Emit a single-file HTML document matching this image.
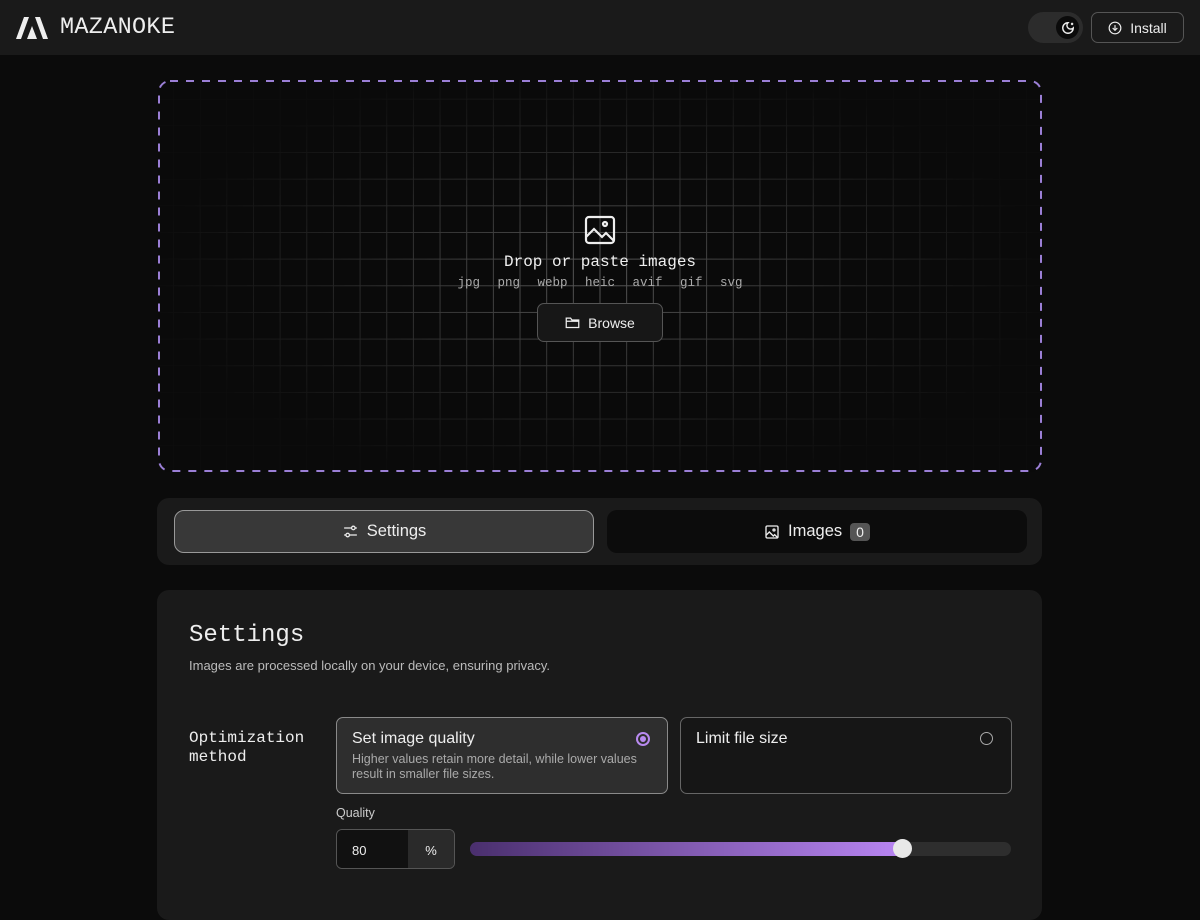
<!DOCTYPE html>
<html><head><meta charset="utf-8"><style>
*{box-sizing:border-box;margin:0;padding:0}
body{width:1200px;height:899px;overflow:hidden;background:#0b0b0b;font-family:"Liberation Sans",sans-serif;color:#eee;position:relative}
.mono{font-family:"Liberation Mono",monospace}
header{position:absolute;left:0;top:0;width:1200px;height:55px;background:#1a1a1a}
.logo{position:absolute;left:16px;top:14px;display:flex;align-items:center;gap:12px}
.logo span{font-size:23.5px;color:#eee;letter-spacing:0.3px}
.toggle{position:absolute;left:1028px;top:12px;width:55px;height:31px;border-radius:16px;background:#2c2c2c}
.toggle .k{position:absolute;right:4px;top:4px;width:23px;height:23px;border-radius:50%;background:#0b0b0b;display:flex;align-items:center;justify-content:center}
.install{position:absolute;left:1091px;top:12px;width:93px;height:31px;border:1px solid #555;border-radius:7px;display:flex;align-items:center;justify-content:center;gap:8px;font-size:14px;color:#eee}
.drop{position:absolute;left:158px;top:80px;width:884px;height:392px;border-radius:12px;overflow:hidden;background:#0a0a0a}
.grid{position:absolute;inset:0;background-image:linear-gradient(to right,#5a5a5a 1px,transparent 1px),linear-gradient(to bottom,#5a5a5a 1px,transparent 1px);background-size:26.67px 26.67px;background-position:15px 18.7px;-webkit-mask-image:radial-gradient(ellipse 50% 55% at 50% 50%,rgba(0,0,0,1),rgba(0,0,0,.35) 60%,rgba(0,0,0,.04) 100%);mask-image:radial-gradient(ellipse 50% 55% at 50% 50%,rgba(0,0,0,1),rgba(0,0,0,.35) 60%,rgba(0,0,0,.04) 100%)}
.dash{position:absolute;left:158px;top:80px;width:884px;height:392px}
.center{position:absolute;left:158px;top:80px;width:884px;text-align:center}
.browse{position:absolute;left:537px;top:303px;width:126px;height:39px;border:1px solid #555;border-radius:7px;background:#171717;display:flex;align-items:center;justify-content:center;gap:8px;font-size:14px}
.tabs{position:absolute;left:157px;top:498px;width:885px;height:67px;background:#1a1a1a;border-radius:12px}
.tab{position:absolute;top:12px;height:43px;width:420px;border-radius:10px;display:flex;align-items:center;justify-content:center;gap:8px;font-size:16.5px}
.panel{position:absolute;left:157px;top:590px;width:885px;height:330px;background:#1a1a1a;border-radius:12px}
.opt{position:absolute;top:127px;height:77px;width:332px;border-radius:7px;padding:12px 15px}
</style></head><body>
<header>
<div class="logo">
<svg width="32" height="22" viewBox="0 0 32 22"><path d="M0 22 L8 0 H13 L5 22Z M19 0 H24 L32 22 H27Z M11 22 L16 9 L21 22 Z" fill="#eee"/></svg>
<span class="mono">MAZANOKE</span></div>
<div class="toggle"><div class="k"><svg width="14" height="14" viewBox="0 0 24 24" fill="none" stroke="#eee" stroke-width="2.4"><path d="M12 3a6 6 0 0 0 9 9 9 9 0 1 1-9-9z"/><path d="M19 3v4M17 5h4"/></svg></div></div>
<div class="install"><svg width="14" height="14" viewBox="0 0 24 24" fill="none" stroke="#eee" stroke-width="2"><circle cx="12" cy="12" r="10"/><path d="M12 7v9M8 12l4 4 4-4"/></svg>Install</div>
</header>
<div class="drop"><div class="grid"></div></div>
<svg class="dash" viewBox="0 0 884 392"><rect x="1" y="1" width="882" height="390" rx="11" fill="none" stroke="#9b7fd6" stroke-width="2" stroke-dasharray="8 8"/></svg>
<div class="center">
<svg style="position:absolute;left:426px;top:135px" width="32" height="30" viewBox="0 0 32 30" fill="none" stroke="#eee" stroke-width="2.2"><rect x="2" y="2" width="28" height="26" rx="3"/><circle cx="21" cy="9" r="2"/><path d="M2 22 L10 14 L18 22 L22 18 L30 26"/></svg>
<div class="mono" style="position:absolute;left:0;width:884px;top:173px;font-size:16px;color:#eee">Drop or paste images</div>
<div class="mono" style="position:absolute;left:0;width:884px;top:196px;font-size:12.5px;color:#aaa;word-spacing:10px">jpg png webp heic avif gif svg</div>
</div>
<div class="browse"><svg width="15" height="13" viewBox="0 0 24 20" fill="none" stroke="#eee" stroke-width="2"><path d="M2 3h7l2 3h11v12H2z M2 8h20"/></svg>Browse</div>
<div class="tabs">
<div class="tab" style="left:17px;background:#383838;border:1.5px solid #999"><svg width="17" height="17" viewBox="0 0 24 24" fill="none" stroke="#eee" stroke-width="1.8"><path d="M3 7h10M19 7h2M3 17h2M11 17h10"/><circle cx="16" cy="7" r="2.5"/><circle cx="8" cy="17" r="2.5"/></svg>Settings</div>
<div class="tab" style="left:450px;background:#0c0c0c"><svg width="16" height="16" viewBox="0 0 24 24" fill="none" stroke="#eee" stroke-width="2"><rect x="3" y="3" width="18" height="18" rx="2"/><circle cx="15" cy="9" r="1.5"/><path d="M3 17l5-5 6 6 2-2 5 5"/></svg>Images <span style="background:#555;border-radius:4px;padding:1px 6px;font-size:14px">0</span></div>
</div>
<div class="panel">
<div class="mono" style="position:absolute;left:32px;top:32px;font-size:24px;color:#eee">Settings</div>
<div style="position:absolute;left:32px;top:68px;font-size:13px;color:#bbb">Images are processed locally on your device, ensuring privacy.</div>
<div class="mono" style="position:absolute;left:32px;top:139px;font-size:16px;line-height:19px;color:#eee">Optimization<br>method</div>
<div class="opt" style="left:179px;background:#2e2e2e;border:1.5px solid #8a8a8a">
<div style="font-size:16px;color:#eee">Set image quality</div>
<div style="font-size:12.5px;color:#aaa;margin-top:4px;line-height:15px">Higher values retain more detail, while lower values result in smaller file sizes.</div>
<div style="position:absolute;right:17px;top:14px;width:14px;height:14px;border-radius:50%;border:2px solid #b88af0;display:flex;align-items:center;justify-content:center"><div style="width:6px;height:6px;border-radius:50%;background:#b88af0"></div></div>
</div>
<div class="opt" style="left:523px;background:#161616;border:1px solid #666">
<div style="font-size:16px;color:#eee">Limit file size</div>
<div style="position:absolute;right:18px;top:14px;width:13px;height:13px;border-radius:50%;border:1.5px solid #aaa"></div>
</div>
<div style="position:absolute;left:179px;top:216px;font-size:12.5px;color:#ccc">Quality</div>
<div style="position:absolute;left:179px;top:239px;width:119px;height:40px;border:1px solid #555;border-radius:6px;overflow:hidden;display:flex">
<div style="width:71px;background:#111;font-size:13px;padding:13px 15px">80</div>
<div style="flex:1;background:#2a2a2a;font-size:13px;padding:13px 0;text-align:center">%</div></div>
<div style="position:absolute;left:313px;top:252px;width:541px;height:14px;border-radius:7px;background:#2e2e2e"></div>
<div style="position:absolute;left:313px;top:252px;width:433px;height:14px;border-radius:7px;background:linear-gradient(to right,#4a2f6e,#b885f2)"></div>
<div style="position:absolute;left:736px;top:249px;width:19px;height:19px;border-radius:50%;background:#e8e8e8"></div>
</div>
</body></html>
